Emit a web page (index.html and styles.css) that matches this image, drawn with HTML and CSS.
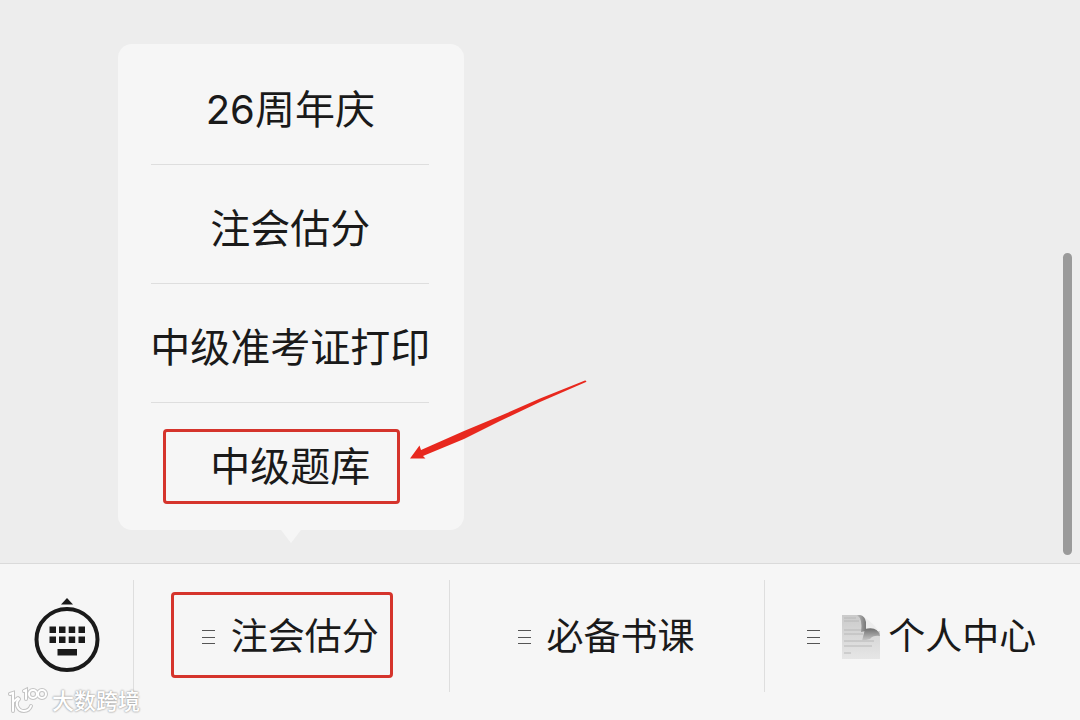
FILE: index.html
```html
<!DOCTYPE html>
<html lang="zh-CN">
<head>
  <meta charset="UTF-8" />
  <meta name="viewport" content="width=device-width, initial-scale=1.0"/>
  <title>公众号菜单</title>
  <link rel="stylesheet" href="styles.css">
</head>
<body>

  <main class="chat">
    <div class="scroll-thumb"></div>
  </main>

  <nav class="bar">
    <button class="keyboard" type="button" aria-label="键盘">
      <svg width="66" height="76" viewBox="0 0 66 76">
        <path d="M33 1 L39 7.5 H27 Z" fill="#1a1a1a"/>
        <circle cx="33" cy="42.5" r="30.5" fill="none" stroke="#1a1a1a" stroke-width="4"/>
        <g fill="#1a1a1a">
          <rect x="15.5" y="29.5" width="6.5" height="6.5"/>
          <rect x="25" y="29.5" width="6.5" height="6.5"/>
          <rect x="34.7" y="29.5" width="6.5" height="6.5"/>
          <rect x="44.5" y="29.5" width="6.5" height="6.5"/>
          <rect x="15.5" y="39.5" width="6.5" height="6.5"/>
          <rect x="25" y="39.5" width="6.5" height="6.5"/>
          <rect x="34.7" y="39.5" width="6.5" height="6.5"/>
          <rect x="44.5" y="39.5" width="6.5" height="6.5"/>
          <rect x="23.5" y="52" width="19.5" height="6.5"/>
        </g>
      </svg>
    </button>

    <div class="tab">
      <button class="tab-button" type="button">
        <span class="lines"></span>
        <span>注会估分</span>
      </button>
      <div class="mark tab-mark"></div>

      <div class="menu">
        <ul class="menu-list">
          <li><a href="#">26周年庆</a></li>
          <li><a href="#">注会估分</a></li>
          <li><a href="#">中级准考证打印</a></li>
          <li><a href="#">中级题库</a></li>
        </ul>
        <div class="mark menu-mark"></div>
        <svg class="arrow" width="180" height="82" viewBox="0 0 180 82">
          <path d="M2 80.5 L11.5 67.5 L13 72 L56 53 L92 38 L132 20.5 L177 2.5 Q179 2.5 178 4 L132 24 L92 43 L56 61 L15 78 L17.5 80.5 Z" fill="#e8281e"/>
        </svg>
      </div>
    </div>

    <div class="tab">
      <button class="tab-button" type="button">
        <span class="lines"></span>
        <span>必备书课</span>
      </button>
    </div>

    <div class="tab">
      <button class="tab-button" type="button">
        <span class="lines"></span>
        <svg class="page" width="38" height="46" viewBox="0 0 38 46">
          <defs>
            <linearGradient id="paper" x1="0" y1="0" x2="0" y2="1">
              <stop offset="0" stop-color="#cbcbcb"/>
              <stop offset="1" stop-color="#e6e6e6"/>
            </linearGradient>
            <linearGradient id="curl" x1="0" y1="0" x2="1" y2="0">
              <stop offset="0" stop-color="#bbbbbb"/>
              <stop offset="1" stop-color="#777777"/>
            </linearGradient>
            <linearGradient id="fold" x1="0" y1="0" x2="0" y2="1">
              <stop offset="0" stop-color="#6e6e6e"/>
              <stop offset="1" stop-color="#cccccc"/>
            </linearGradient>
          </defs>
          <path d="M0 1 H17 Q22 2 23 8 V17 H38 V45 H0 Z" fill="url(#paper)"/>
          <path d="M2 4 H14 M2 7 H17 M2 16 H21 M2 20 H21 M2 27 H32 M2 32 H30 M2 39 H9" stroke="#b8b8b8" fill="none"/>
          <path d="M17 1 Q27 4 36 16 L23 16 Q24 4 17 1 Z" fill="#ededed"/>
          <path d="M15 1 H18 Q23 2 24 8 V17 L19 18 Q21 5 15 1 Z" fill="url(#curl)"/>
          <path d="M20 27 L23 15 Q36 12 38 22 Q31 21 28 25 Z" fill="url(#fold)"/>
        </svg>
        <span>个人中心</span>
      </button>
    </div>
  </nav>

  <div class="watermark">
    <svg width="40" height="30" viewBox="0 0 40 30">
      <defs>
        <g id="logo" fill="none" stroke-linecap="round">
          <path d="M2 8 L5 7 V25 M5 16 L10 12"/>
          <path d="M11 13 A7 7 0 0 0 16 25 Q21 25 23 20"/>
          <path d="M16 5 L18 4 V13"/>
          <circle cx="25" cy="8" r="4"/>
          <circle cx="34" cy="8" r="4"/>
        </g>
      </defs>
      <use href="#logo" stroke="#c4c4c4" stroke-width="4"/>
      <use href="#logo" stroke="#ffffff" stroke-width="2"/>
    </svg>
    <span>大数跨境</span>
  </div>

</body>
</html>
```

FILE: styles.css
```css
* {
  box-sizing: border-box;
}

body {
  margin: 0;
  min-height: 100vh;
  display: flex;
  flex-direction: column;
  position: relative;
  overflow: hidden;
  background-color: #ededed;
  color: #1a1a1a;
  font-family: "Inter", "Noto Sans CJK SC", sans-serif;
}

button {
  margin: 0;
  padding: 0;
  border: none;
  background: none;
  color: inherit;
  font: inherit;
}

.chat {
  flex: 1;
  position: relative;
}

.scroll-thumb {
  position: absolute;
  right: 8px;
  bottom: 8px;
  width: 9px;
  height: 302px;
  border-radius: 5px;
  background-color: #9a9a9a;
}

/* bottom bar */
.bar {
  display: flex;
  padding: 16px 0 28px;
  border-top: 1px solid #dadada;
  background-color: #f6f6f6;
}

.keyboard {
  width: 133px;
  height: 112px;
  padding-bottom: 3px;
  display: flex;
  align-items: center;
  justify-content: center;
}

.tab {
  flex: 1;
  position: relative;
  border-left: 1px solid #dedede;
}

.tab-button {
  width: 100%;
  height: 112px;
  padding: 2px 2px 0 0;
  display: flex;
  align-items: center;
  justify-content: center;
  font-size: 37px;
  line-height: 56px;
}

.lines {
  width: 13px;
  height: 14px;
  margin-right: 16px;
  border-top: 1px solid #555;
  border-bottom: 1px solid #555;
  display: flex;
  align-items: center;
}

.lines::before {
  content: "";
  width: 100%;
  height: 1px;
  background-color: #555;
}

.page {
  margin: 0 8px 0 6px;
}

/* popup menu */
.menu {
  position: absolute;
  left: 50%;
  bottom: 100%;
  width: 346px;
  margin-bottom: 50px;
  padding: 2px 35px 8px 33px;
  transform: translateX(-50%);
  border-radius: 14px;
  background-color: #f6f6f6;
}

.menu::after {
  content: "";
  position: absolute;
  left: 50%;
  top: 100%;
  margin-left: -10px;
  border: 10px solid transparent;
  border-top: 13px solid #f6f6f6;
  border-bottom: none;
}

.menu-list {
  margin: 0;
  padding: 0;
  list-style: none;
}

.menu-list li {
  border-bottom: 1px solid #dedede;
}

.menu-list li:last-child {
  border-bottom-color: transparent;
}

.menu-list a {
  display: flex;
  justify-content: center;
  padding: 34px 0 24px;
  color: inherit;
  font-size: 40px;
  line-height: 60px;
  text-decoration: none;
  white-space: nowrap;
}

/* red annotations */
.mark {
  position: absolute;
  border: 3px solid #d5342c;
  border-radius: 4px;
  pointer-events: none;
}

.tab-mark {
  top: 12px;
  left: 37px;
  right: 56px;
  height: 86px;
}

.menu-mark {
  left: 45px;
  right: 64px;
  bottom: 26px;
  height: 75px;
}

.arrow {
  position: absolute;
  left: 290px;
  bottom: 70px;
}

.watermark {
  position: absolute;
  left: 8px;
  bottom: 4px;
  display: flex;
  align-items: center;
  gap: 4px;
  color: #fff;
  font-size: 22px;
  font-weight: 500;
  line-height: 30px;
  text-shadow: 0 0 2px #999, 0 0 2px #aaa;
}
```
